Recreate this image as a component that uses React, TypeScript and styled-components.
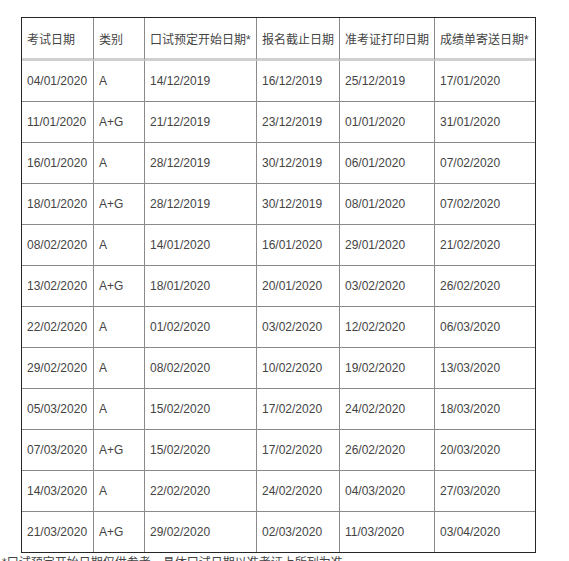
import React from "react";
import styled, { createGlobalStyle } from "styled-components";

const Global = createGlobalStyle`
  html, body { margin: 0; padding: 0; background: #fff; }
  body { font-family: Arial, "Liberation Sans", "Noto Sans CJK SC", sans-serif; color: #444; }
`;

const Page = styled.div`
  padding-top: 17px;
`;

const Table = styled.table`
  margin-left: 21px;
  border-collapse: separate;
  border-spacing: 0;
  border: 1px solid #262626;
  font-size: 12px;
  table-layout: fixed;
`;

const Th = styled.th<{ $w: number; $last?: boolean }>`
  width: ${(p) => p.$w}px;
  height: 43px;
  padding: 0 0 0 5px;
  box-sizing: border-box;
  text-align: left;
  font-weight: normal;
  color: #444;
  border-right: ${(p) => (p.$last ? "none" : "1px solid #8a8a8a")};
  border-bottom: 3px solid #cfcfcf;
  white-space: nowrap;
  overflow: hidden;
`;

const Td = styled.td<{ $last?: boolean; $bottom?: boolean }>`
  height: ${(p) => (p.$bottom ? 40 : 41)}px;
  padding: 0 0 0 5px;
  box-sizing: border-box;
  color: #444;
  border-right: ${(p) => (p.$last ? "none" : "1px solid #8a8a8a")};
  border-bottom: ${(p) => (p.$bottom ? "none" : "1px solid #8a8a8a")};
  white-space: nowrap;
`;

const Note = styled.p`
  margin: 3px 0 0;
  padding-left: 2px;
  font-size: 12px;
  line-height: 14px;
  color: #444;
  white-space: nowrap;
`;

const headers = ["考试日期", "类别", "口试预定开始日期*", "报名截止日期", "准考证打印日期", "成绩单寄送日期*"];
const widths = [72, 51, 112, 83, 95, 100];

const rows = [
  ["04/01/2020", "A", "14/12/2019", "16/12/2019", "25/12/2019", "17/01/2020"],
  ["11/01/2020", "A+G", "21/12/2019", "23/12/2019", "01/01/2020", "31/01/2020"],
  ["16/01/2020", "A", "28/12/2019", "30/12/2019", "06/01/2020", "07/02/2020"],
  ["18/01/2020", "A+G", "28/12/2019", "30/12/2019", "08/01/2020", "07/02/2020"],
  ["08/02/2020", "A", "14/01/2020", "16/01/2020", "29/01/2020", "21/02/2020"],
  ["13/02/2020", "A+G", "18/01/2020", "20/01/2020", "03/02/2020", "26/02/2020"],
  ["22/02/2020", "A", "01/02/2020", "03/02/2020", "12/02/2020", "06/03/2020"],
  ["29/02/2020", "A", "08/02/2020", "10/02/2020", "19/02/2020", "13/03/2020"],
  ["05/03/2020", "A", "15/02/2020", "17/02/2020", "24/02/2020", "18/03/2020"],
  ["07/03/2020", "A+G", "15/02/2020", "17/02/2020", "26/02/2020", "20/03/2020"],
  ["14/03/2020", "A", "22/02/2020", "24/02/2020", "04/03/2020", "27/03/2020"],
  ["21/03/2020", "A+G", "29/02/2020", "02/03/2020", "11/03/2020", "03/04/2020"],
];

export default function App() {
  return (
    <Page>
      <Global />
      <Table>
        <thead>
          <tr>
            {headers.map((h, i) => (
              <Th key={h} $w={widths[i]} $last={i === headers.length - 1}>
                {h}
              </Th>
            ))}
          </tr>
        </thead>
        <tbody>
          {rows.map((r, ri) => (
            <tr key={ri}>
              {r.map((c, ci) => (
                <Td key={ci} $last={ci === r.length - 1} $bottom={ri === rows.length - 1}>
                  {c}
                </Td>
              ))}
            </tr>
          ))}
        </tbody>
      </Table>
      <Note>*口试预定开始日期仅供参考，具体口试日期以准考证上所列为准。</Note>
    </Page>
  );
}
